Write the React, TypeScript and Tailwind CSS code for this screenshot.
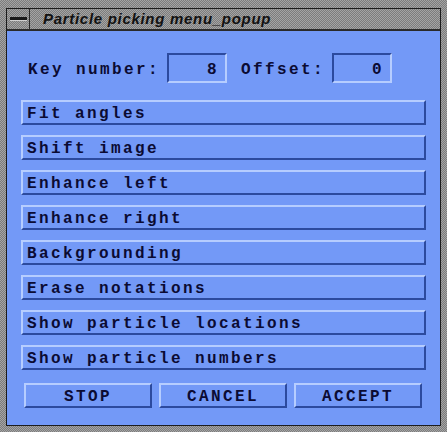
const dither =
  "bg-[repeating-conic-gradient(#7c7c7c_0%_25%,#a4a4a4_0%_50%)] bg-size-[2px_2px]";

const mono = "font-['Liberation_Mono',monospace] font-bold text-[16px] tracking-[2.4px] text-[#0b0b33]";

const raised =
  "border-2 border-t-[#b6cdff] border-l-[#b6cdff] border-b-[#2c4a9e] border-r-[#2c4a9e]";

const sunken =
  "border-2 border-t-[#2c4a9e] border-l-[#2c4a9e] border-b-[#b6cdff] border-r-[#b6cdff]";

const actions = [
  "Fit angles",
  "Shift image",
  "Enhance left",
  "Enhance right",
  "Backgrounding",
  "Erase notations",
  "Show particle locations",
  "Show particle numbers",
];

const NumberField = ({ value }: { value: string }) => (
  <div className={`w-[60px] h-[30px] flex items-center justify-end pr-[6px] pt-[3px] ${sunken} ${mono}`}>
    {value}
  </div>
);

const App = () => {
  return (
    <div className={`w-[447px] h-[432px] flex flex-col pt-[8px] px-[6px] pb-[6px] ${dither}`}>
      <div className="flex flex-col flex-1 border border-[#1c1c1c]">
        {/* Title bar */}
        <div className={`h-[22px] flex border-b-2 border-[#2a2a2a] ${dither}`}>
          <div className="w-[23px] flex items-center justify-center border-r border-[#2a2a2a]">
            <div className="w-[17px] h-[4px] bg-[#1a1a1a] border-b border-[#d0d0d0]" />
          </div>
          <div className="pl-[13px] flex items-center font-['Liberation_Sans',sans-serif] italic font-bold text-[15px] tracking-[0.7px] text-[#111]">
            Particle picking menu_popup
          </div>
        </div>

        {/* Panel */}
        <div className="flex-1 bg-[#7399f7] flex flex-col px-[14px] pt-[22px]">
          <div className="flex items-center pl-[7px] h-[30px]">
            <span className={`pt-[4px] ${mono}`}>Key number:</span>
            <div className="ml-[7px]">
              <NumberField value="8" />
            </div>
            <span className={`ml-[14px] pt-[4px] ${mono}`}>Offset:</span>
            <div className="ml-[7px]">
              <NumberField value="0" />
            </div>
          </div>

          <div className="flex flex-col gap-[10px] mt-[17px]">
            {actions.map((label) => (
              <button
                key={label}
                className={`h-[25px] w-[405px] text-left pl-[4px] pt-[3px] flex items-center ${raised} ${mono}`}
              >
                {label}
              </button>
            ))}
          </div>

          <div className="flex gap-[7px] mt-[13px] pl-[3px]">
            {["STOP", "CANCEL", "ACCEPT"].map((label) => (
              <button
                key={label}
                className={`w-[128px] h-[25px] flex items-center justify-center pt-[3px] ${raised} ${mono}`}
              >
                {label}
              </button>
            ))}
          </div>
        </div>
      </div>
    </div>
  );
};

export default App;
